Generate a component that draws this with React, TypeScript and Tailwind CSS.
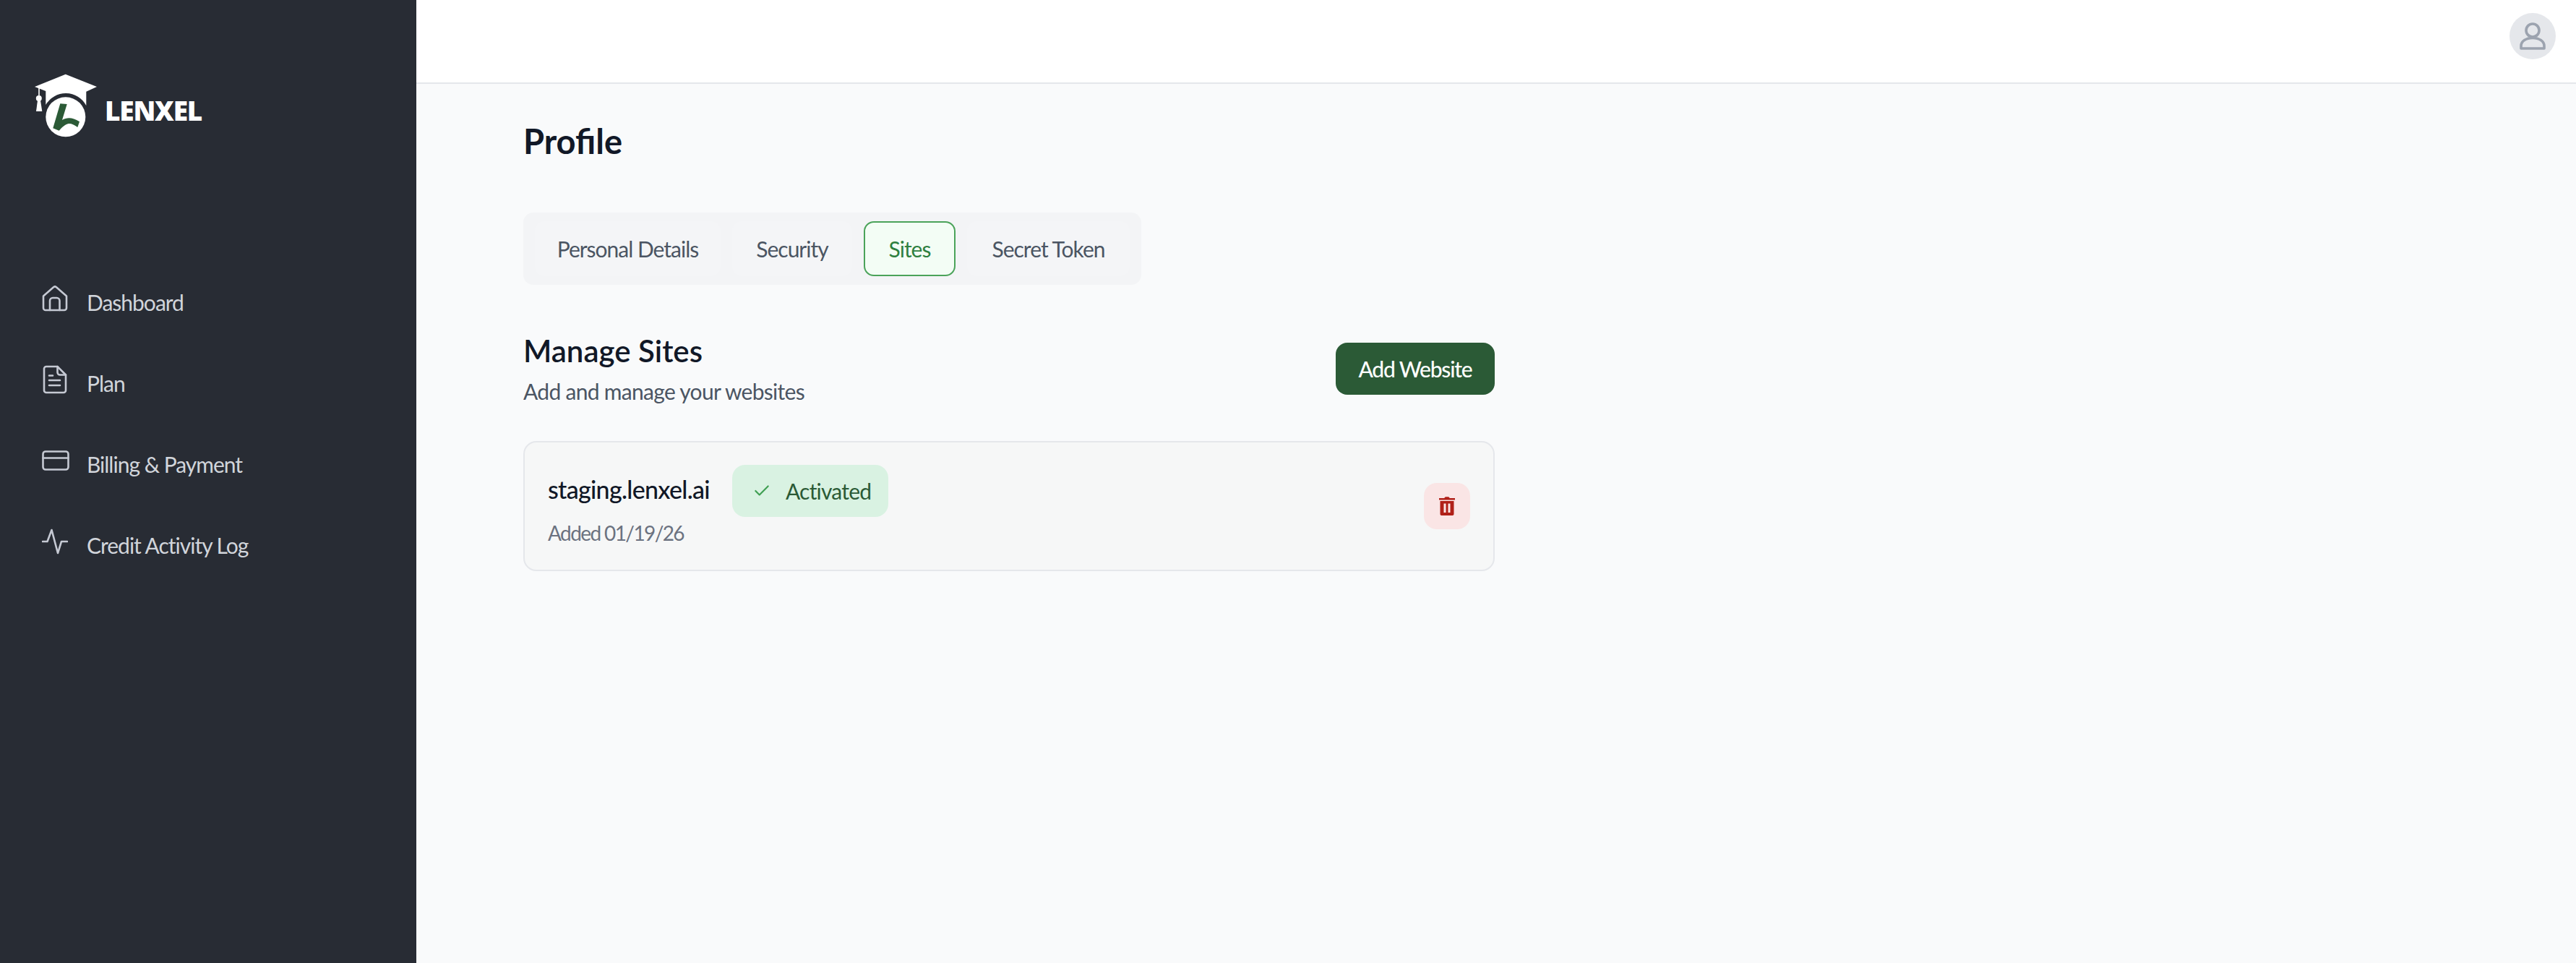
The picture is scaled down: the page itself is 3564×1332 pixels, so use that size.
import { Check } from "lucide-react";

const font = "font-['Lato','Noto_Sans',sans-serif]";

function HomeIcon() {
  return (
    <svg width="36" height="36" viewBox="0 0 36 36" fill="none" stroke="#c5c9d3" strokeWidth="2.6" strokeLinecap="round" strokeLinejoin="round">
      <path d="M2 14.5 16 2.2a3 3 0 0 1 4 0L34 14.5V31a3 3 0 0 1-3 3H5a3 3 0 0 1-3-3Z" />
      <path d="M11 34V21a4 4 0 0 1 4-4h5.500a4 4 0 0 1 4 4v13" />
    </svg>
  );
}

function FileIcon() {
  return (
    <svg width="36" height="40" viewBox="0 0 36 40" fill="none" stroke="#c5c9d3" strokeWidth="2.6" strokeLinecap="round" strokeLinejoin="round">
      <path d="M6 2h15.500L33 13.500V35a3 3 0 0 1-3 3H6a3 3 0 0 1-3-3V5a3 3 0 0 1 3-3Z" />
      <path d="M21.500 2v8a3.500 3.500 0 0 0 3.500 3.500h8" />
      <path d="M10 14.500h5M10 21h15M10 28h15" />
    </svg>
  );
}

function CardIcon() {
  return (
    <svg width="38" height="28" viewBox="0 0 38 28" fill="none" stroke="#c5c9d3" strokeWidth="2.6" strokeLinecap="round" strokeLinejoin="round">
      <rect x="1.500" y="1.500" width="35" height="25" rx="3.500" />
      <path d="M1.500 10.500h35" />
    </svg>
  );
}

function ActivityIcon() {
  return (
    <svg width="36" height="36" viewBox="0 0 36 36" fill="none" stroke="#c5c9d3" strokeWidth="2.6" strokeLinecap="round" strokeLinejoin="round">
      <path d="M1 18h6.500L13.500 2 22 34l5-16h8" />
    </svg>
  );
}

function Logo() {
  return (
    <svg width="90" height="92" viewBox="0 0 90 92">
      <path d="M42.700.7 86 18 71.300 24.700V44A32 32 0 0 0 15.300 43V24L-.3 18Z" fill="#fff" />
      <path d="M6 19v11" stroke="#fff" strokeWidth="1.600" />
      <circle cx="5.800" cy="34" r="4" fill="#fff" />
      <path d="M4 37h4l2.300 15H2Z" fill="#fff" />
      <circle cx="42.800" cy="59.800" r="27.500" fill="#fff" />
      <path d="M35.300 41.300 44.700 42 38 64C45 60 52 60 62 66.300L59.300 74C54 70 50 68.500 47 69 42 70 38 74 33.700 78.700L25.300 75.300Z" fill="#2b5a36" />
    </svg>
  );
}

function NavItem({ icon, label }: { icon: React.ReactNode; label: string }) {
  return (
    <a className="flex h-[112px] items-center text-[30px] leading-none tracking-[-1px] text-[#d1d5db]">
      <span className="flex w-[62px] shrink-0 -translate-y-[5px] items-center justify-start">{icon}</span>
      {label}
    </a>
  );
}

export default function App() {
  return (
    <div className={`flex h-screen overflow-hidden bg-[#f9fafb] ${font}`}>
      <aside className="w-[576px] shrink-0 bg-[#282c34] pl-[58px]">
        <div className="-ml-[10px] flex items-end gap-[7px] pt-[102px]">
          <Logo />
          <span className="mb-[23px] font-['Open_Sans',sans-serif] text-[37px] font-extrabold leading-none tracking-[-1.2px] text-white">LENXEL</span>
        </div>
        <nav className="mt-[168px]">
          <NavItem icon={<HomeIcon />} label="Dashboard" />
          <NavItem icon={<FileIcon />} label="Plan" />
          <NavItem icon={<CardIcon />} label="Billing & Payment" />
          <NavItem icon={<ActivityIcon />} label="Credit Activity Log" />
        </nav>
      </aside>

      <main className="flex min-w-0 flex-1 flex-col">
        <header className="flex h-[116px] shrink-0 items-start justify-end border-b-2 border-[#e5e7eb] bg-white pr-[28px] pt-[18px]">
          <div className="flex h-[64px] w-[64px] items-center justify-center rounded-full bg-[#e5e7eb]">
            <svg width="64" height="64" viewBox="0 0 64 64" fill="none" stroke="#9ca3af" strokeWidth="3.600" strokeLinejoin="round">
              <circle cx="32" cy="24" r="9" />
              <path d="M16 49v-3.500c0-6.500 7-11 16-11s16 4.500 16 11V49Z" />
            </svg>
          </div>
        </header>

        <div className="pl-[148px] pt-[52px]">
          <h1 className="text-[47px] font-bold leading-[54px] text-[#111827]">Profile</h1>

          <div className="mt-[72px] inline-flex h-[100px] items-center gap-[16px] rounded-[14px] bg-[#f3f4f6] px-[16px] text-[30px] tracking-[-1px] text-[#4b5563]">
            <button className="h-[76px] w-[257px] rounded-[14px] bg-[#f4f5f7]">Personal Details</button>
            <button className="h-[76px] w-[166px] rounded-[14px] bg-[#f4f5f7]">Security</button>
            <button className="h-[76px] w-[127px] rounded-[14px] border-2 border-[#4ba35a] bg-[#f3fdf5] text-[#2f8040]">Sites</button>
            <button className="h-[76px] w-[225px] rounded-[14px] bg-[#f4f5f7]">Secret Token</button>
          </div>

          <section className="mt-[78px] w-[1344px]">
            <div className="flex items-start justify-between">
              <div>
                <h2 className="-mt-[12px] text-[42px] font-semibold leading-[50px] text-[#111827]">Manage Sites</h2>
                <p className="mt-[11px] text-[30px] leading-[40px] tracking-[-0.7px] text-[#4b5563]">Add and manage your websites</p>
              </div>
              <button className="mt-[2px] h-[72px] w-[220px] rounded-[16px] bg-[#2b5a36] text-[30px] font-medium tracking-[-1.2px] text-white">Add Website</button>
            </div>

            <div className="mt-[49px] flex h-[180px] items-center justify-between rounded-[18px] border-2 border-[#e5e7eb] bg-[#f6f7f7] pl-[32px] pr-[32px]">
              <div>
                <div className="flex items-center gap-[32px]">
                  <span className="-mt-[4px] w-[223px] text-[34px] font-medium leading-none tracking-[-0.7px] text-[#111827]">staging.lenxel.ai</span>
                  <span className="flex h-[72px] w-[216px] items-center gap-[20px] rounded-[18px] bg-[#d9f2e2] pl-[28px] text-[30px] tracking-[-0.8px] text-[#2b5a36]">
                    <Check className="h-[26px] w-[26px] text-[#3f9f52]" strokeWidth={2} />
                    Activated
                  </span>
                </div>
                <p className="mt-[2px] text-[28px] leading-[40px] tracking-[-1.6px] text-[#6b7280]">Added 01/19/26</p>
              </div>
              <button className="flex h-[64px] w-[64px] items-center justify-center rounded-[18px] bg-[#fae5e5]">
                <svg width="22" height="26" viewBox="0 0 22 26" fill="#b02018">
                  <path d="M7.500 2c0-1 .8-1.800 1.800-1.800h3.400c1 0 1.800.8 1.800 1.800H22v2.500H0V2Z" />
                  <path fillRule="evenodd" d="M1.500 6h19v18c0 1.200-.8 2-2 2H3.500c-1.200 0-2-.8-2-2ZM6.500 9.500v12.500h3V9.500Zm6 0v12.500h3V9.500Z" />
                </svg>
              </button>
            </div>
          </section>
        </div>
      </main>
    </div>
  );
}
